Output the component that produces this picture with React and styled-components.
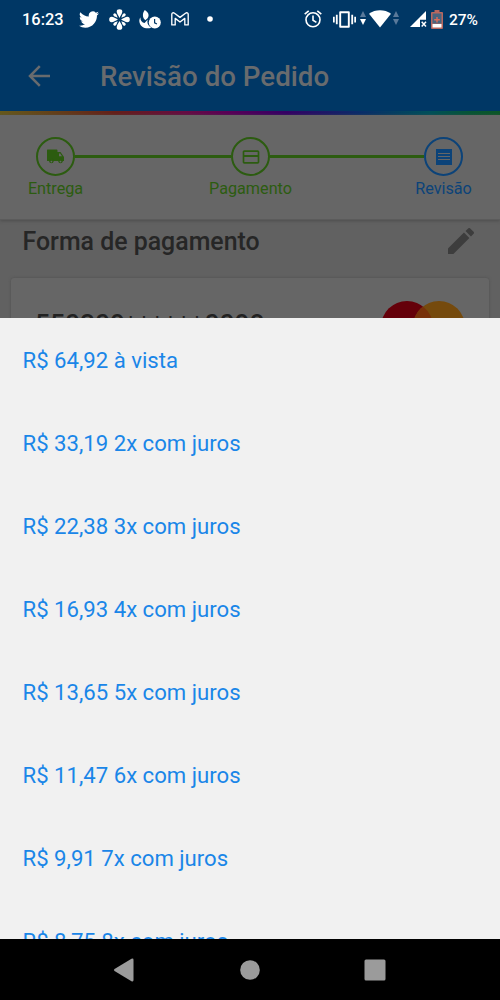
import React from 'react';
import styled, { createGlobalStyle } from 'styled-components';

const Global = createGlobalStyle`
  * { box-sizing: border-box; }
  body { margin: 0; background: #000; font-family: Roboto, "Liberation Sans", sans-serif; }
  svg { display: block; flex: none; }
`;

const Phone = styled.div`
  width: 500px;
  height: 1000px;
  display: flex;
  flex-direction: column;
  overflow: hidden;
`;
const Backdrop = styled.div`
  height: 318px;
  flex: none;
  overflow: hidden;
  background: #616161;
`;
const Header = styled.header`
  height: 111px;
  background: #003765;
`;
const StatusBar = styled.div`
  height: 38px;
  display: flex;
  align-items: center;
  padding: 0 22px;
  color: #fff;
`;
const StatusText = styled.span`
  flex: none;
  font-size: ${(p) => p.$size || 16.4}px;
  font-weight: 500;
  line-height: 38px;
  width: ${(p) => p.$width}px;
  margin-left: ${(p) => p.$gap || 0}px;
  white-space: nowrap;
  padding-top: 1px;
`;
const StatusIcon = styled.svg`
  margin-left: ${(p) => p.$gap}px;
  fill: #fff;
`;
const TitleBar = styled.div`
  display: flex;
  align-items: center;
  height: 73px;
  padding: 3px 22px 0 28px;
`;
const Title = styled.h1`
  margin: 2px 0 0 50px;
  font-size: 27.7px;
  line-height: 36px;
  font-weight: 500;
  color: #686b6e;
`;
const Rainbow = styled.div`
  height: 4px;
  background: linear-gradient(90deg, #66591c 0, #64401a 11%, #65201a 23%, #660d43 37%, #590057 46%, #360064 57%, #092d69 72%, #00505a 86%, #075536 94%, #0c5727 100%);
`;
const Stepper = styled.div`
  height: 105px;
  display: flex;
  padding: 22px 18px 0;
  background: #666;
  border-bottom: 1px solid #5b5b5b;
  box-shadow: 0 1px 3px #4d4d4d;
  position: relative;
`;
const Step = styled.div`
  flex: none;
  width: 39px;
  display: flex;
  flex-direction: column;
  align-items: center;
  margin: 0 ${(p) => p.$right || 0}px 0 ${(p) => p.$left || 0}px;
  color: ${(p) => p.$color};
`;
const StepCircle = styled.div`
  width: 39px;
  height: 39px;
  border: 2px solid currentColor;
  border-radius: 50%;
  display: flex;
  align-items: center;
  justify-content: center;
`;
const StepLabel = styled.span`
  margin-top: 3px;
  font-size: 16.2px;
  line-height: 20px;
  white-space: nowrap;
`;
const Connector = styled.div`
  flex: none;
  width: ${(p) => p.$width}px;
  height: 3px;
  margin-top: 18px;
  background: #2c5c10;
`;
const SectionHead = styled.div`
  height: 58px;
  padding: 0 26px 16px 22.5px;
  display: flex;
  align-items: center;
  justify-content: space-between;
`;
const SectionTitle = styled.h2`
  margin: 2px 0 0;
  font-size: 24.9px;
  line-height: 32px;
  font-weight: 500;
  color: #262626;
`;
const Card = styled.div`
  height: 100px;
  margin: 0 11px;
  padding: 23px 24px 0 24px;
  display: flex;
  justify-content: space-between;
  background: #666;
  border-radius: 3px;
  box-shadow: 0 0 3px #505050;
`;
const CardNumber = styled.span`
  font-size: 26.4px;
  line-height: 30px;
  font-weight: 500;
  color: #222;
  margin-top: 8px;
`;
const Mask = styled.span`
  font-weight: 400;
  letter-spacing: 1.9px;
  line-height: 1;
  vertical-align: -2px;
`;
const Sheet = styled.ul`
  list-style: none;
  margin: 0;
  padding: 1px 0 0;
  height: 621px;
  flex: none;
  overflow: hidden;
  background: #f1f1f1;
`;
const Option = styled.li`
  height: 83px;
  padding-left: 22.5px;
  font-size: 22.15px;
  line-height: 83px;
  color: #1a86e8;
`;
const NavBar = styled.nav`
  height: 61px;
  flex: none;
  display: flex;
  align-items: center;
  padding-left: 113px;
  background: #000;
`;
const NavIcon = styled.svg`
  margin-left: ${(p) => p.$gap || 0}px;
  fill: #9b9b9b;
`;

const options = [
  'R$ 64,92 à vista',
  'R$ 33,19 2x com juros',
  'R$ 22,38 3x com juros',
  'R$ 16,93 4x com juros',
  'R$ 13,65 5x com juros',
  'R$ 11,47 6x com juros',
  'R$ 9,91 7x com juros',
  'R$ 8,75 8x com juros',
];

const Bird = () => (
  <StatusIcon $gap={15} width="20" height="17" viewBox="0 2 24 20">
    <path d="M23.95 4.57a10 10 0 0 1-2.82.77 4.96 4.96 0 0 0 2.16-2.72c-.95.56-2 .96-3.13 1.18a4.92 4.92 0 0 0-8.38 4.48A13.93 13.93 0 0 1 1.67 3.15a4.92 4.92 0 0 0 1.52 6.57 4.9 4.9 0 0 1-2.23-.61v.06a4.92 4.92 0 0 0 3.95 4.83 5 5 0 0 1-2.21.08 4.94 4.94 0 0 0 4.6 3.42A9.87 9.87 0 0 1 0 19.54a13.99 13.99 0 0 0 7.55 2.21c9.05 0 14-7.5 14-13.99l-.02-.64a9.94 9.94 0 0 0 2.42-2.55z" />
  </StatusIcon>
);

const Flower = () => (
  <StatusIcon $gap={10} width="21" height="21" viewBox="-10.5 -10.5 21 21">
    {[0, 90, 180, 270].map((a) => (
      <path key={a} transform={`rotate(${a})`} d="M0-1.6C-1.2-4-2.8-6-2.8-7.9A2.8 2.4 0 0 1 2.8-7.9C2.8-6 1.2-4 0-1.6Z" />
    ))}
    {[45, 135, 225, 315].map((a) => (
      <path key={a} transform={`rotate(${a})`} d="M0-2.6C-.8-4.4-1.5-5.2-1.5-6.700A1.500 1.500 0 0 1 1.500-6.700C1.500-5.200.8-4.400 0-2.600Z" />
    ))}
  </StatusIcon>
);

const FlameClock = () => (
  <StatusIcon $gap={9} width="22" height="19" viewBox="0 0 22 19">
    <path d="M5.8 0C9.5 2.2 10.6 5.2 8.6 8.2L6.3 10.2 4.6 8.3C3.4 6 3.8 2.3 5.8 0ZM1.4 7.2C1.2 10.4 2.9 12.6 5.6 13.1L8.8 9.4C7.6 12.8 9 16 12.3 17.4C9.6 18.7 6 18.6 3.3 16.7C0 14.2-.5 9.8 1.4 7.2Z" />
    <circle cx="15.8" cy="12.4" r="6" />
    <path d="M15.6 9.1v3.7l2.3 1.2" fill="none" stroke="#003765" strokeWidth="1.2" />
  </StatusIcon>
);

const Mail = () => (
  <StatusIcon $gap={10} width="18" height="14" viewBox="0 0 18 14">
    <path d="M.8 12.9V2.3C.8.7 2.3.4 3.5 1.2L9 5.4l5.5-4.2c1.2-.8 2.7-.5 2.7 1.1v10.6h-3.4V6.4L9 10 4.2 6.4v6.5Z" fill="none" stroke="#fff" strokeWidth="1.35" strokeLinejoin="round" />
  </StatusIcon>
);

const Alarm = () => (
  <StatusIcon $gap={91} width="18" height="18" viewBox="0 0 18 18">
    <g fill="none" stroke="#fff" strokeWidth="1.6">
      <circle cx="9" cy="9.8" r="7" />
      <path d="M.7 4.2 4.7.8M17.3 4.2l-4-3.4M9 5.5v4.7l3.4 2.2" />
    </g>
  </StatusIcon>
);

const Vibrate = () => (
  <StatusIcon $gap={11} width="23" height="17" viewBox="0 0 24 17">
    <path d="M7.5.9h9v15.2h-9Z" fill="none" stroke="#fff" strokeWidth="2" strokeLinejoin="round" />
    <path d="M3 3.5h1.9v10H3zM0 5.5h1.8v6H0zM19.1 3.5H21v10h-1.900zM22.200 5.500H24v6h-1.800z" />
  </StatusIcon>
);

const Traffic = ({ gap, down }) => (
  <StatusIcon $gap={gap} width="6" height="16" viewBox="0 0 6 16">
    <path d="M3 0 6 6H0Z" fill="#59799a" />
    <path d="M0 8h6l-3 6Z" fill={down} />
  </StatusIcon>
);

const Wifi = () => (
  <StatusIcon $gap={3} width="22" height="18" viewBox="0 0 22 18">
    <path d="M0 3.7C6.4-.9 15.600-.9 22 3.700L11 17.400Z" />
  </StatusIcon>
);

const Signal = () => (
  <StatusIcon $gap={11} width="17" height="17" viewBox="0 0 17 17">
    <path d="M0 16 16 0v8.800h-6V16Z" />
    <path d="m11.700 10.800 4.300 4.600m0-4.600-4.300 4.600" stroke="#fff" strokeWidth="1.500" />
  </StatusIcon>
);

const Battery = () => (
  <StatusIcon $gap={4} width="12" height="19" viewBox="0 0 12 19">
    <path d="M3.500 0h5v2H11q1 0 1 1v15q0 1-1 1H1q-1 0-1-1V3q0-1 1-1h2.500Z" fill="#b9675f" />
    <path d="M1.500 3.500h9v10h-9z" fill="#48647f" />
    <path d="M1.500 14h9v3.500h-9z" />
    <path d="M6 7v5.500M3.200 9.700h5.600" stroke="#df6b59" strokeWidth="1.400" />
  </StatusIcon>
);

const Truck = () => (
  <svg width="19" height="16" viewBox="0 0 19 16" fill="currentColor">
    <path d="M1.500.5h9q1 0 1 1V3h3l3.500 5v4h-1.300a2.200 2.200 0 0 1-4.300 0H7.600a2.200 2.200 0 0 1-4.300 0H1V1.500Q1 .5 1.500.5Z" />
    <path d="M13 4.500h1.200l1.800 2.700h-3Z" fill="#666" />
    <path d="M3.200 12a2.200 2.200 0 0 0 4.400 0 2.200 2.200 0 0 0-4.400 0ZM12.300 12a2.200 2.200 0 0 0 4.400 0 2.200 2.200 0 0 0-4.400 0Z" />
    <circle cx="5.400" cy="12.600" r=".9" fill="#666" />
    <circle cx="14.500" cy="12.600" r=".9" fill="#666" />
  </svg>
);

const CreditCard = () => (
  <svg width="20" height="20" viewBox="0 0 24 24" fill="currentColor">
    <path d="M20 4H4c-1.110 0-1.990.89-1.990 2L2 18c0 1.110.89 2 2 2h16c1.110 0 2-.89 2-2V6c0-1.110-.89-2-2-2zm0 14H4v-6h16v6zm0-8.500H4V6h16v3.500z" />
  </svg>
);

const Receipt = () => (
  <svg width="16" height="16" viewBox="0 0 16 16">
    <path d="M0 0h16v16H0Z" fill="currentColor" />
    <path d="M2 4.500h12M2 7.500h12M2 10.500h12" stroke="#666" strokeWidth="1" />
  </svg>
);

export default function App() {
  const green = '#2c5c10';
  return (
    <Phone>
      <Global />
      <Backdrop>
        <Header>
          <StatusBar>
            <StatusText $width={42}>16:23</StatusText>
            <Bird />
            <Flower />
            <FlameClock />
            <Mail />
            <StatusIcon $gap={18} width="6" height="6" viewBox="0 0 6 6"><circle cx="3" cy="3" r="2.800" /></StatusIcon>
            <Alarm />
            <Vibrate />
            <Traffic gap={4} down="#fff" />
            <Wifi />
            <Traffic gap={2} down="#59799a" />
            <Signal />
            <Battery />
            <StatusText $width={30} $gap={6} $size={15.5}>27%</StatusText>
          </StatusBar>
          <TitleBar>
            <svg width="22" height="22" viewBox="0 0 22 22" fill="none" stroke="#686b6e" strokeWidth="2.500">
              <path d="M22 11H2M11.800 1.200 2 11l9.800 9.800" />
            </svg>
            <Title>Revisão do Pedido</Title>
          </TitleBar>
        </Header>
        <Rainbow />
        <Stepper>
          <Step $left={18} $color={green}>
            <StepCircle><Truck /></StepCircle>
            <StepLabel>Entrega</StepLabel>
          </Step>
          <Connector $width={156} />
          <Step $color={green}>
            <StepCircle><CreditCard /></StepCircle>
            <StepLabel>Pagamento</StepLabel>
          </Step>
          <Connector $width={154} />
          <Step $color="#0c4379">
            <StepCircle><Receipt /></StepCircle>
            <StepLabel>Revisão</StepLabel>
          </Step>
        </Stepper>
        <SectionHead>
          <SectionTitle>Forma de pagamento</SectionTitle>
          <svg width="26" height="26" viewBox="3 3 18 18" fill="#3d3d3d">
            <path d="M3 17.250V21h3.750L17.810 9.940l-3.750-3.750L3 17.250zM20.710 7.040c.39-.39.39-1.020 0-1.410l-2.340-2.340a1 1 0 0 0-1.410 0l-1.830 1.830 3.750 3.750 1.830-1.830z" />
          </svg>
        </SectionHead>
        <Card>
          <CardNumber>550209<Mask>******</Mask>0098</CardNumber>
          <svg width="84" height="52" viewBox="0 0 84 52">
            <circle cx="26" cy="26" r="26" fill="#65000a" />
            <circle cx="58" cy="26" r="26" fill="#754a0d" />
            <path d="M42 5.500a26 26 0 0 1 0 41 26 26 0 0 1 0-41Z" fill="#78310a" />
          </svg>
        </Card>
      </Backdrop>
      <Sheet>
        {options.map((label) => <Option key={label}>{label}</Option>)}
      </Sheet>
      <NavBar>
        <NavIcon width="21" height="24" viewBox="0 0 21 24"><path d="M1.500 11 18.500.800Q20.500 0 20.500 2v20q0 2-2 1.200L1.500 13Q.3 12 1.500 11Z" /></NavIcon>
        <NavIcon $gap={106} width="20" height="20" viewBox="0 0 20 20"><circle cx="10" cy="10" r="9.800" /></NavIcon>
        <NavIcon $gap={104} width="22" height="22" viewBox="0 0 22 22"><rect x=".5" y=".5" width="21" height="21" rx="1.500" /></NavIcon>
      </NavBar>
    </Phone>
  );
}
